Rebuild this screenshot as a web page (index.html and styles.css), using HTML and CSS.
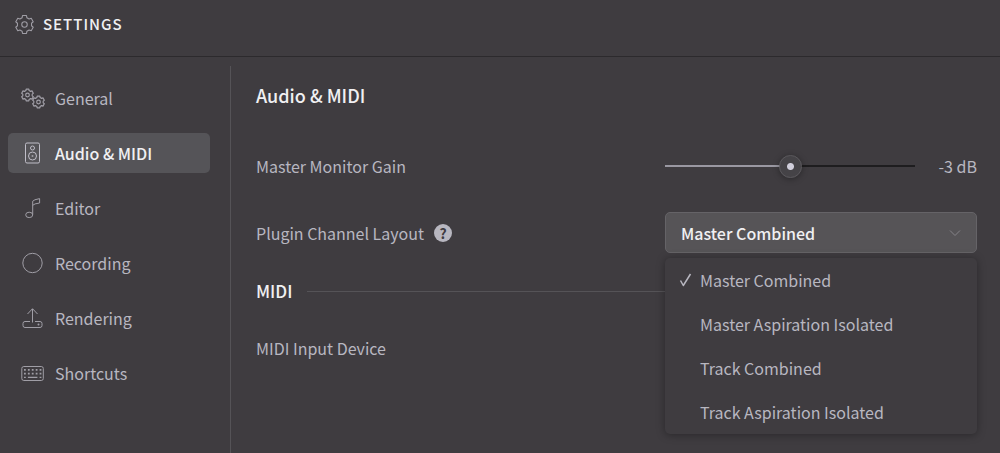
FILE: index.html
```html
<!DOCTYPE html>
<html lang="en">
<head>
  <meta charset="UTF-8">
  <meta name="viewport" content="width=device-width, initial-scale=1.0">
  <title>Settings</title>
  <link rel="stylesheet" href="styles.css">
</head>
<body>
  <svg class="defs" aria-hidden="true">
    <symbol id="gear" viewBox="-10 -10 20 20">
      <path d="M-1.9-8.5H1.9L2.3-6.4 4.4-5.2 6.4-5.9 8.3-2.6 6.7-1.2V1.2L8.3 2.6 6.4 5.9 4.4 5.2 2.3 6.4 1.9 8.5H-1.9L-2.3 6.4-4.4 5.2-6.4 5.9-8.3 2.6-6.7 1.2V-1.2L-8.3-2.6-6.4-5.9-4.4-5.2-2.3-6.4Z"/>
      <circle r="2.6"/>
    </symbol>
  </svg>

  <header class="header">
    <svg class="icon header-icon"><use href="#gear"/></svg>
    <h1>SETTINGS</h1>
  </header>

  <div class="layout">
    <nav class="sidebar">
      <button class="nav-item">
        <svg class="icon" viewBox="0 0 24 24">
          <use href="#gear" x="-0.5" y="2" width="14" height="14" stroke-width="1.7"/>
          <use href="#gear" x="10.5" y="9" width="14" height="14" stroke-width="1.7"/>
        </svg>
        General
      </button>
      <button class="nav-item active">
        <svg class="icon" viewBox="0 0 24 24">
          <rect x="4.5" y="2" width="14" height="20" rx="1.5"/>
          <circle cx="11.5" cy="7" r="2"/>
          <circle cx="11.5" cy="15" r="4"/>
          <circle class="dot" cx="11.5" cy="15" r="1"/>
        </svg>
        Audio &amp; MIDI
      </button>
      <button class="nav-item">
        <svg class="icon" viewBox="0 0 24 24">
          <ellipse cx="8.2" cy="18.9" rx="3.5" ry="2.7"/>
          <path d="M11.7 18.7V5.2Q12.8 3.6 18.6 2.6V7Q13.1 7.6 11.7 9.3"/>
        </svg>
        Editor
      </button>
      <button class="nav-item">
        <svg class="icon" viewBox="0 0 24 24">
          <circle cx="11.5" cy="12" r="9.7"/>
        </svg>
        Recording
      </button>
      <button class="nav-item">
        <svg class="icon" viewBox="0 0 24 24">
          <path d="M11.5 16.5V3M6.5 8L11.5 2.7 16.5 8M9 15.5H4Q2 15.5 2 17.5V19.5Q2 21.5 4 21.5H19Q21 21.5 21 19.5V17.5Q21 15.5 19 15.5H14"/>
          <circle class="dot" cx="17.5" cy="18.5" r="1"/>
        </svg>
        Rendering
      </button>
      <button class="nav-item">
        <svg class="icon" viewBox="0 0 24 24">
          <rect x="0.8" y="5.5" width="21.5" height="14" rx="2"/>
          <path stroke-width="1.6" stroke-dasharray="1.8 2.1" d="M3 8.9H20.6M3 12.6H20.6"/>
          <path stroke-width="1.4" d="M3 16.4H4.8M6.9 16.4H16.4M18.6 16.4H20.4"/>
        </svg>
        Shortcuts
      </button>
    </nav>

    <main class="content">
      <h2>Audio &amp; MIDI</h2>

      <div class="row">
        <label for="gain">Master Monitor Gain</label>
        <div class="control">
          <input type="range" id="gain" class="slider" min="-24" max="18" value="-3">
          <output for="gain" id="gainValue">-3 dB</output>
        </div>
      </div>

      <div class="row">
        <div class="label-group">
          <label for="layout">Plugin Channel Layout</label>
          <button class="help" aria-label="Help">?</button>
        </div>
        <div class="control dropdown">
          <select id="layout" class="select">
            <option selected>Master Combined</option>
            <option>Master Aspiration Isolated</option>
            <option>Track Combined</option>
            <option>Track Aspiration Isolated</option>
          </select>
          <svg class="icon chevron" viewBox="0 0 12 8"><path d="M1 1.5L6 6.5 11 1.5"/></svg>
          <ul class="menu" role="listbox">
            <li role="option" aria-selected="true">
              <svg class="icon check" viewBox="0 0 14 16"><path d="M1.5 8.5L4.3 13.5 11.5 2"/></svg>
              Master Combined
            </li>
            <li role="option">Master Aspiration Isolated</li>
            <li role="option">Track Combined</li>
            <li role="option">Track Aspiration Isolated</li>
          </ul>
        </div>
      </div>

      <h3>MIDI</h3>

      <div class="row">
        <span>MIDI Input Device</span>
      </div>
    </main>
  </div>
</body>
</html>
```

FILE: styles.css
```css
* {
  box-sizing: border-box;
}

body {
  margin: 0;
  min-height: 100vh;
  display: flex;
  flex-direction: column;
  background: #3f3c40;
  color: #b8b7c0;
  font-family: "Noto Sans CJK SC", "Noto Sans", sans-serif;
  font-size: 16px;
  line-height: 24px;
}

button,
select {
  font: inherit;
  color: inherit;
}

h1,
h2,
h3 {
  margin: 0;
  color: #f0f0f2;
  font-weight: 500;
}

.defs {
  position: absolute;
  width: 0;
  height: 0;
}

.icon {
  width: 24px;
  height: 24px;
  flex-shrink: 0;
  fill: none;
  stroke: #a09ea6;
  stroke-width: 1;
  stroke-linejoin: round;
}

.icon .dot {
  fill: #a09ea6;
  stroke: none;
}

/* header */
.header {
  display: flex;
  align-items: center;
  gap: 8px;
  height: 57px;
  padding: 0 14px 8px;
  border-bottom: 1px solid #2c2a2d;
}

.header-icon {
  width: 21px;
  height: 21px;
}

.header h1 {
  font-size: 15px;
  letter-spacing: 1px;
}

.layout {
  flex: 1;
  display: flex;
  padding-top: 9px;
}

/* sidebar */
.sidebar {
  width: 231px;
  display: flex;
  flex-direction: column;
  gap: 15px;
  padding: 12px 20px 0 8px;
  border-right: 1px solid #555357;
}

.nav-item {
  display: flex;
  align-items: center;
  gap: 10px;
  height: 40px;
  padding: 0 13px;
  border: none;
  border-radius: 5px;
  background: none;
  text-align: left;
  cursor: pointer;
}

.nav-item.active {
  background: #555458;
  color: #f0f0f2;
  font-weight: 500;
}

.nav-item.active .icon {
  stroke: #c0bec8;
}

/* content */
.content {
  flex: 1;
  padding: 17px 23px 0 25px;
}

.content h2 {
  font-size: 18px;
}

.row {
  display: flex;
  align-items: center;
  justify-content: space-between;
  min-height: 41px;
  margin-top: 26px;
}

.row:first-of-type {
  margin-top: 38px;
}

.label-group {
  display: flex;
  align-items: center;
  gap: 10px;
}

.help {
  width: 18px;
  height: 18px;
  padding: 0;
  border: none;
  border-radius: 50%;
  background: #b8b7c0;
  color: #3f3c40;
  font-size: 14px;
  font-weight: 700;
  line-height: 18px;
}

.control {
  position: relative;
  display: flex;
  align-items: center;
  justify-content: space-between;
  width: 312px;
}

.slider {
  appearance: none;
  width: 250px;
  height: 24px;
  margin: 0;
  background: none;
}

.slider::-webkit-slider-runnable-track {
  height: 2px;
  background: linear-gradient(to right, #9a98a2 50%, #1e1d1f 50%);
}

.slider::-webkit-slider-thumb {
  appearance: none;
  width: 23px;
  height: 23px;
  margin-top: -10px;
  border: 1px solid #5a585c;
  border-radius: 50%;
  background: radial-gradient(circle, #d0cedb 3px, #454347 4px);
  box-shadow: 0 1px 6px rgba(0, 0, 0, 0.35);
}

.select {
  appearance: none;
  width: 100%;
  height: 41px;
  padding: 0 15px;
  border: 1px solid #656367;
  border-radius: 5px;
  background: #565457;
  color: #f0f0f2;
  font-weight: 500;
}

.chevron {
  position: absolute;
  right: 16px;
  width: 12px;
  height: 8px;
  stroke: #858388;
  pointer-events: none;
}

.menu {
  position: absolute;
  top: 46px;
  left: 0;
  width: 100%;
  margin: 0;
  padding: 0;
  border-radius: 5px;
  background: #3f3c40;
  box-shadow: 0 1px 8px rgba(0, 0, 0, 0.35);
  list-style: none;
}

.menu li {
  display: flex;
  align-items: center;
  height: 44px;
  padding-left: 35px;
}

.menu li[aria-selected="true"] {
  padding-left: 14px;
}

.check {
  width: 14px;
  height: 16px;
  margin-right: 7px;
  stroke: #b8b7c0;
  stroke-width: 1.5;
}

.content h3 {
  display: flex;
  align-items: center;
  gap: 14px;
  margin: 26px 0 -2px;
  font-size: 17px;
}

.content h3::after {
  content: "";
  flex: 1;
  height: 1px;
  background: #555357;
}
```
